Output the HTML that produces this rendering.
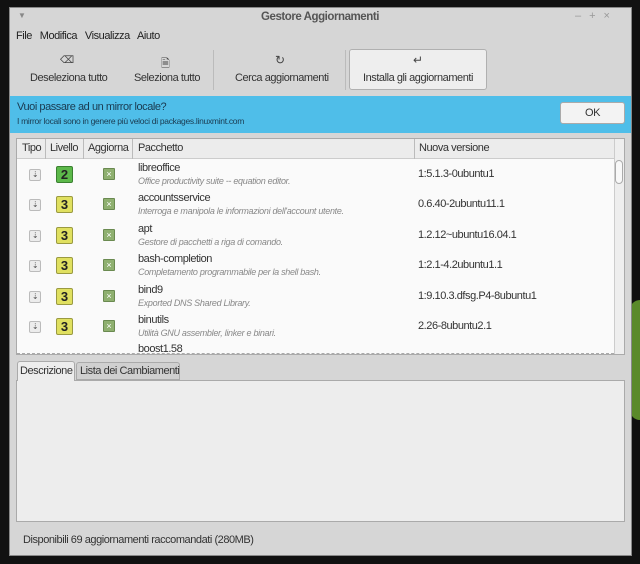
<!DOCTYPE html>
<html><head><meta charset="utf-8"><style>
*{margin:0;padding:0;box-sizing:border-box}
body{width:640px;height:564px;background:#111;position:relative;overflow:hidden;font-family:"Liberation Sans Narrow","Liberation Sans",sans-serif;font-size:11px;letter-spacing:-0.45px;color:#333}
.abs{position:absolute}
.win{left:9px;top:7px;width:623px;height:549px;background:#d6d6d6;border:1px solid #888}
.green{left:630px;top:300px;width:20px;height:120px;background:#5a8a2a;border-radius:10px 0 0 10px}
.t{white-space:nowrap}
.row{position:absolute;left:17px;width:597px;height:30px}
.dl{position:absolute;left:12px;top:9px;width:12px;height:12px;background:#ececec;border:1px solid #bbb;border-radius:2px;font-size:8px;text-align:center;line-height:10px;color:#555}
.lv{position:absolute;left:39px;top:6px;width:17px;height:17px;border:1px solid #9a9a40;border-radius:2px;background:#e0e060;font-weight:bold;font-size:13px;text-align:center;line-height:15px;color:#222;font-family:"Liberation Sans",sans-serif;letter-spacing:0}
.lv.g{background:#5cb84a;border-color:#3a8030}
.cb{position:absolute;left:86px;top:8px;width:12px;height:12px;background:#8fb070;border:1px solid #6a8a50;border-radius:1px;color:#fff;font-size:9px;text-align:center;line-height:10px;letter-spacing:0}
.nm{position:absolute;left:121px;top:2px;font-size:11px;color:#333}
.ds{position:absolute;left:121px;top:16px;font-size:9px;font-style:italic;color:#888;letter-spacing:-0.3px}
.vr{position:absolute;left:401px;top:8px;font-size:11px;color:#333}
</style></head><body>
<div class="abs green"></div>
<div class="abs win"></div>
<div class="abs t" style="left:18px;top:11px;font-size:8px;color:#888">▼</div>
<div class="abs t" style="left:0;width:640px;top:11px;text-align:center;font-weight:bold;color:#555;font-size:11.5px">Gestore Aggiornamenti</div>
<div class="abs t" style="left:575px;top:10px;color:#999;font-size:11px;letter-spacing:8px">–+×</div>
<div class="abs t" style="left:16px;top:30px;font-size:11px;color:#222">File&nbsp;&nbsp; Modifica&nbsp;&nbsp; Visualizza&nbsp;&nbsp; Aiuto</div>
<div class="abs" style="left:213px;top:50px;width:1px;height:40px;background:#bbb"></div>
<div class="abs" style="left:345px;top:50px;width:1px;height:40px;background:#bbb"></div>
<div class="abs" style="left:349px;top:49px;width:138px;height:41px;background:#eee;border:1px solid #b0b0b0;border-radius:3px"></div>
<div class="abs t" style="left:60px;top:55px;font-size:10px;color:#444">⌫</div>
<div class="abs t" style="left:161px;top:55px;font-size:11px;color:#444">🗎</div>
<div class="abs t" style="left:275px;top:53px;font-size:12px;color:#444">↻</div>
<div class="abs t" style="left:413px;top:53px;font-size:12px;color:#444">↵</div>
<div class="abs t" style="left:30px;top:72px">Deseleziona tutto</div>
<div class="abs t" style="left:134px;top:72px">Seleziona tutto</div>
<div class="abs t" style="left:235px;top:72px">Cerca aggiornamenti</div>
<div class="abs t" style="left:363px;top:72px">Installa gli aggiornamenti</div>
<div class="abs" style="left:10px;top:96px;width:621px;height:37px;background:#4fbee9"></div>
<div class="abs t" style="left:17px;top:101px;font-size:11px;color:#1a3a50">Vuoi passare ad un mirror locale?</div>
<div class="abs t" style="left:17px;top:116px;font-size:8.5px;color:#1a3a50;letter-spacing:-0.3px">I mirror locali sono in genere più veloci di packages.linuxmint.com</div>
<div class="abs" style="left:560px;top:102px;width:65px;height:22px;background:#f3f3f3;border:1px solid #aaa;border-radius:3px;text-align:center;line-height:20px;color:#333">OK</div>
<div class="abs" style="left:16px;top:138px;width:609px;height:217px;background:#fafafa;border:1px solid #aaa"></div>
<div class="abs" style="left:17px;top:139px;width:597px;height:20px;background:#ececec;border-bottom:1px solid #ccc"></div>
<div class="abs" style="left:45px;top:139px;width:1px;height:20px;background:#bbb"></div>
<div class="abs" style="left:83px;top:139px;width:1px;height:20px;background:#bbb"></div>
<div class="abs" style="left:132px;top:139px;width:1px;height:20px;background:#bbb"></div>
<div class="abs" style="left:414px;top:139px;width:1px;height:20px;background:#bbb"></div>
<div class="abs t" style="left:22px;top:142px">Tipo</div>
<div class="abs t" style="left:50px;top:142px">Livello</div>
<div class="abs t" style="left:88px;top:142px">Aggiorna</div>
<div class="abs t" style="left:138px;top:142px">Pacchetto</div>
<div class="abs t" style="left:419px;top:142px">Nuova versione</div>
<div class="abs" style="left:614px;top:139px;width:10px;height:215px;background:#eee;border-left:1px solid #ccc"></div>
<div class="abs" style="left:615px;top:160px;width:8px;height:24px;background:#f8f8f8;border:1px solid #aaa;border-radius:4px"></div>
<div class="row" style="top:160px"><div class="dl">⇣</div><div class="lv g">2</div><div class="cb">×</div><div class="nm">libreoffice</div><div class="ds">Office productivity suite -- equation editor.</div><div class="vr">1:5.1.3-0ubuntu1</div></div>
<div class="row" style="top:190px"><div class="dl">⇣</div><div class="lv">3</div><div class="cb">×</div><div class="nm">accountsservice</div><div class="ds">Interroga e manipola le informazioni dell'account utente.</div><div class="vr">0.6.40-2ubuntu11.1</div></div>
<div class="row" style="top:221px"><div class="dl">⇣</div><div class="lv">3</div><div class="cb">×</div><div class="nm">apt</div><div class="ds">Gestore di pacchetti a riga di comando.</div><div class="vr">1.2.12~ubuntu16.04.1</div></div>
<div class="row" style="top:251px"><div class="dl">⇣</div><div class="lv">3</div><div class="cb">×</div><div class="nm">bash-completion</div><div class="ds">Completamento programmabile per la shell bash.</div><div class="vr">1:2.1-4.2ubuntu1.1</div></div>
<div class="row" style="top:282px"><div class="dl">⇣</div><div class="lv">3</div><div class="cb">×</div><div class="nm">bind9</div><div class="ds">Exported DNS Shared Library.</div><div class="vr">1:9.10.3.dfsg.P4-8ubuntu1</div></div>
<div class="row" style="top:312px"><div class="dl">⇣</div><div class="lv">3</div><div class="cb">×</div><div class="nm">binutils</div><div class="ds">Utilità GNU assembler, linker e binari.</div><div class="vr">2.26-8ubuntu2.1</div></div>
<div class="row" style="top:343px;height:11px;overflow:hidden"><div class="nm" style="top:0">boost1.58</div></div>
<div class="abs" style="left:17px;top:353px;width:597px;border-top:1px dashed #aaa"></div>
<div class="abs" style="left:16px;top:380px;width:609px;height:142px;background:#ededed;border:1px solid #aaa"></div>
<div class="abs" style="left:17px;top:361px;width:58px;height:20px;background:#ededed;border:1px solid #aaa;border-bottom:none;border-radius:3px 3px 0 0"></div>
<div class="abs" style="left:76px;top:362px;width:104px;height:18px;background:#d0d0d0;border:1px solid #aaa;border-radius:3px 3px 0 0"></div>
<div class="abs t" style="left:20px;top:365px">Descrizione</div>
<div class="abs t" style="left:80px;top:365px">Lista dei Cambiamenti</div>
<div class="abs t" style="left:23px;top:534px">Disponibili 69 aggiornamenti raccomandati (280MB)</div>
</body></html>
